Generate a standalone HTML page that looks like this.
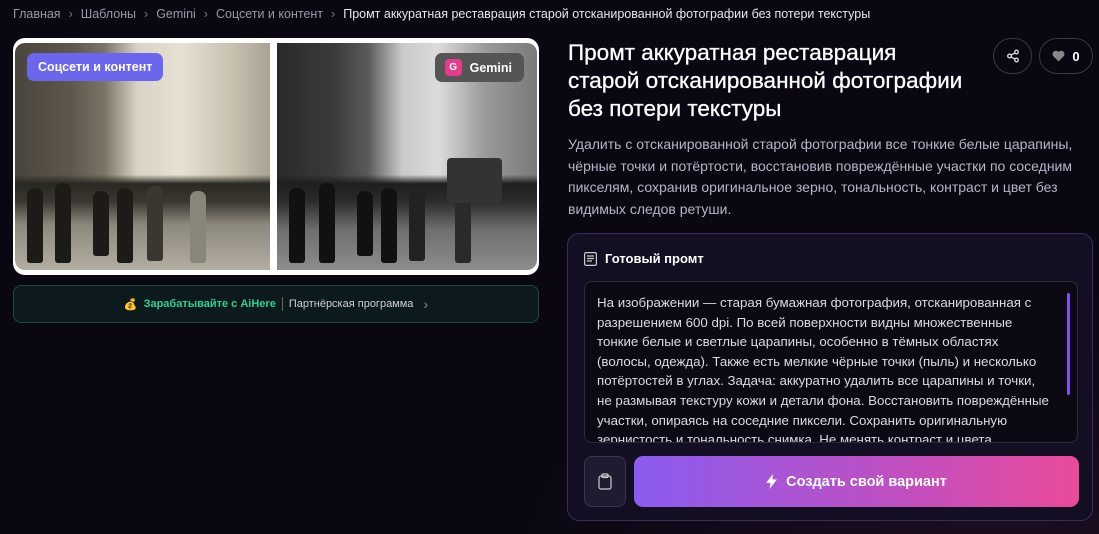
<!DOCTYPE html>
<html><head><meta charset="utf-8"><style>
*{box-sizing:border-box;margin:0;padding:0}
body{width:1099px;height:534px;overflow:hidden;background:radial-gradient(ellipse 700px 400px at 1000px 560px,#1e0d22 0%,#0a0712 70%),#0a0712;font-family:"Liberation Sans","DejaVu Sans",sans-serif;color:#fff;position:relative}
.bc{position:absolute;left:13px;top:7px;font-size:12.5px;color:#9a97a8;white-space:nowrap}
.bc span.s{margin:0 8px;color:#777}
.bc b{color:#e8e6ef;font-weight:normal}
.imgs{position:absolute;left:13px;top:38px;width:526px;height:237px;background:#fff;border-radius:12px;overflow:hidden}
.ph{position:absolute;top:5px;height:227px;overflow:hidden}
.l{left:2px;width:255px;border-radius:10px 0 0 10px;background:
linear-gradient(180deg,transparent 0 58%,#2a2822 62%,#3a3830 70%,#8d887c 80%,#b4aea2 100%),
linear-gradient(90deg,#4a453c 0,#5d574c 22%,#7b7466 35%,#d8d3c4 48%,#e6e1d2 65%,#c8c1b0 85%,#a9a294 100%)}
.r{left:264px;width:260px;border-radius:0 10px 10px 0;background:
linear-gradient(180deg,transparent 0 58%,#1e1e1e 62%,#2c2c2c 70%,#6e6e6e 82%,#8c8c8c 100%),
linear-gradient(90deg,#2a2a2a 0,#3b3b3b 22%,#5a5a5a 35%,#c9c9c9 48%,#dcdcdc 62%,#9a9a9a 80%,#7a7a7a 100%)}
.p{position:absolute;width:16px;border-radius:7px 7px 3px 3px;background:#1c1b18}
.tag{position:absolute;left:14px;top:15px;background:#6b66ee;border-radius:7px;padding:0 11px;height:28px;line-height:28px;font-size:12.5px;font-weight:bold}
.gem{position:absolute;right:15px;top:15px;background:#555;border-radius:7px;height:29px;padding:0 12px 0 10px;display:flex;align-items:center;font-size:12.5px;font-weight:bold;gap:8px}
.gem i{width:17px;height:17px;border-radius:4px;background:#e63b8a;font-style:normal;font-size:10px;display:flex;align-items:center;justify-content:center}
.part{position:absolute;left:13px;top:285px;width:526px;height:38px;border:1px solid #1d4b47;border-radius:8px;background:#0c1a1e;display:flex;align-items:center;justify-content:center;font-size:11px;gap:6px}
.part .g{color:#2bd18c;font-weight:bold}
.part .sep{width:1px;height:14px;background:#666}
.part .w{color:#cfcfd6}
h1{position:absolute;left:568px;top:39px;font-size:22.5px;line-height:28px;font-weight:normal;width:420px;white-space:nowrap;-webkit-text-stroke:.3px #fff}
.btn{position:absolute;top:38px;height:36px;border:1px solid #3a3840;border-radius:18px;display:flex;align-items:center;justify-content:center;font-size:13px;font-weight:bold;gap:7px}
.desc{position:absolute;left:568px;top:134px;width:525px;font-size:14px;line-height:21.5px;color:#b8b4c6}
.card{position:absolute;left:567px;top:233px;width:526px;height:288px;border:1px solid #3a2d5e;border-radius:12px;background:#130e22}
.ch{position:absolute;left:16px;top:17px;font-size:13px;font-weight:bold;display:flex;align-items:center;gap:8px}
.ta{position:absolute;left:16px;top:47px;width:494px;height:162px;border:1px solid #2e2a3a;border-radius:8px;background:#0c0914;overflow:hidden;padding:11px 28px 0 12px;font-size:13.3px;line-height:19.6px;color:#dddae5}
.sb{position:absolute;right:7px;top:11px;width:3px;height:102px;background:#7c4ff0;border-radius:2px}
.cp{position:absolute;left:16px;top:222px;width:42px;height:51px;border:1px solid #3a3550;border-radius:8px;background:#211b32;display:flex;align-items:center;justify-content:center}
.go{position:absolute;left:66px;top:222px;width:445px;height:51px;border-radius:9px;background:linear-gradient(90deg,#8b5cf0,#c04fc0 60%,#ea4a9a);display:flex;align-items:center;justify-content:center;font-size:14.5px;font-weight:bold;gap:9px}
</style></head><body>
<div class="bc">Главная<span class="s">›</span>Шаблоны<span class="s">›</span>Gemini<span class="s">›</span>Соцсети и контент<span class="s">›</span><b>Промт аккуратная реставрация старой отсканированной фотографии без потери текстуры</b></div>
<div class="imgs">
<div class="ph l"><div class="p" style="left:12px;top:145px;height:75px"></div><div class="p" style="left:40px;top:140px;height:80px"></div><div class="p" style="left:78px;top:148px;height:65px"></div><div class="p" style="left:102px;top:145px;height:75px"></div><div class="p" style="left:132px;top:143px;height:75px;background:#3a3731"></div><div class="p" style="left:175px;top:148px;height:72px;background:#8a857a"></div></div>
<div class="ph r"><div class="p" style="left:12px;top:145px;height:75px;background:#111"></div><div class="p" style="left:42px;top:140px;height:80px;background:#111"></div><div class="p" style="left:80px;top:148px;height:65px;background:#111"></div><div class="p" style="left:104px;top:145px;height:75px;background:#111"></div><div class="p" style="left:132px;top:143px;height:75px;background:#222"></div><div class="p" style="left:178px;top:148px;height:72px;background:#2a2a2a"></div><div style="position:absolute;left:170px;top:115px;width:55px;height:45px;background:#333;border-radius:4px"></div></div>
<div class="tag">Соцсети и контент</div><div class="gem"><i>G</i>Gemini</div></div>
<div class="part"><span style="color:#f3b21b">💰</span><span class="g">Зарабатывайте с AiHere</span><span class="sep"></span><span class="w">Партнёрская программа</span><span style="color:#888;font-size:14px;margin-left:4px">›</span></div>
<h1>Промт аккуратная реставрация<br>старой отсканированной фотографии<br>без потери текстуры</h1>
<div class="btn" style="left:993px;width:39px"><svg width="14" height="14" viewBox="0 0 14 14" fill="none" stroke="#ddd" stroke-width="1.3"><circle cx="10.5" cy="3" r="1.8"/><circle cx="3.5" cy="7" r="1.8"/><circle cx="10.5" cy="11" r="1.8"/><path d="M5 6.1l4-2.2M5 7.9l4 2.2"/></svg></div>
<div class="btn" style="left:1039px;width:54px"><svg width="13" height="12" viewBox="0 0 24 22"><path d="M12 21L2.5 11.5A5.5 5.5 0 0 1 12 3.5a5.5 5.5 0 0 1 9.5 8z" fill="#888"/></svg>0</div>
<div class="desc">Удалить с отсканированной старой фотографии все тонкие белые царапины, чёрные точки и потёртости, восстановив повреждённые участки по соседним пикселям, сохранив оригинальное зерно, тональность, контраст и цвет без видимых следов ретуши.</div>
<div class="card">
<div class="ch"><svg width="13" height="14" viewBox="0 0 13 14" fill="none" stroke="#ccc" stroke-width="1.2"><rect x="0.6" y="0.6" width="11.8" height="12.8" rx="1.5"/><path d="M3 4h7M3 6.5h7M3 9h5"/></svg>Готовый промт</div>
<div class="ta">На изображении — старая бумажная фотография, отсканированная с разрешением 600 dpi. По всей поверхности видны множественные тонкие белые и светлые царапины, особенно в тёмных областях (волосы, одежда). Также есть мелкие чёрные точки (пыль) и несколько потёртостей в углах. Задача: аккуратно удалить все царапины и точки, не размывая текстуру кожи и детали фона. Восстановить повреждённые участки, опираясь на соседние пиксели. Сохранить оригинальную зернистость и тональность снимка. Не менять контраст и цвета.<div class="sb"></div></div>
<div class="cp"><svg width="14" height="17" viewBox="0 0 14 17" fill="none" stroke="#ccc" stroke-width="1.2"><rect x="1" y="3" width="12" height="13" rx="2"/><rect x="4" y="1" width="6" height="3.5" rx="1"/></svg></div>
<div class="go"><svg width="11" height="15" viewBox="0 0 11 15"><path d="M7 0L0 9h4.5L3.5 15 11 5.5H6.5z" fill="#fff"/></svg>Создать свой вариант</div>
</div>
</body></html>
